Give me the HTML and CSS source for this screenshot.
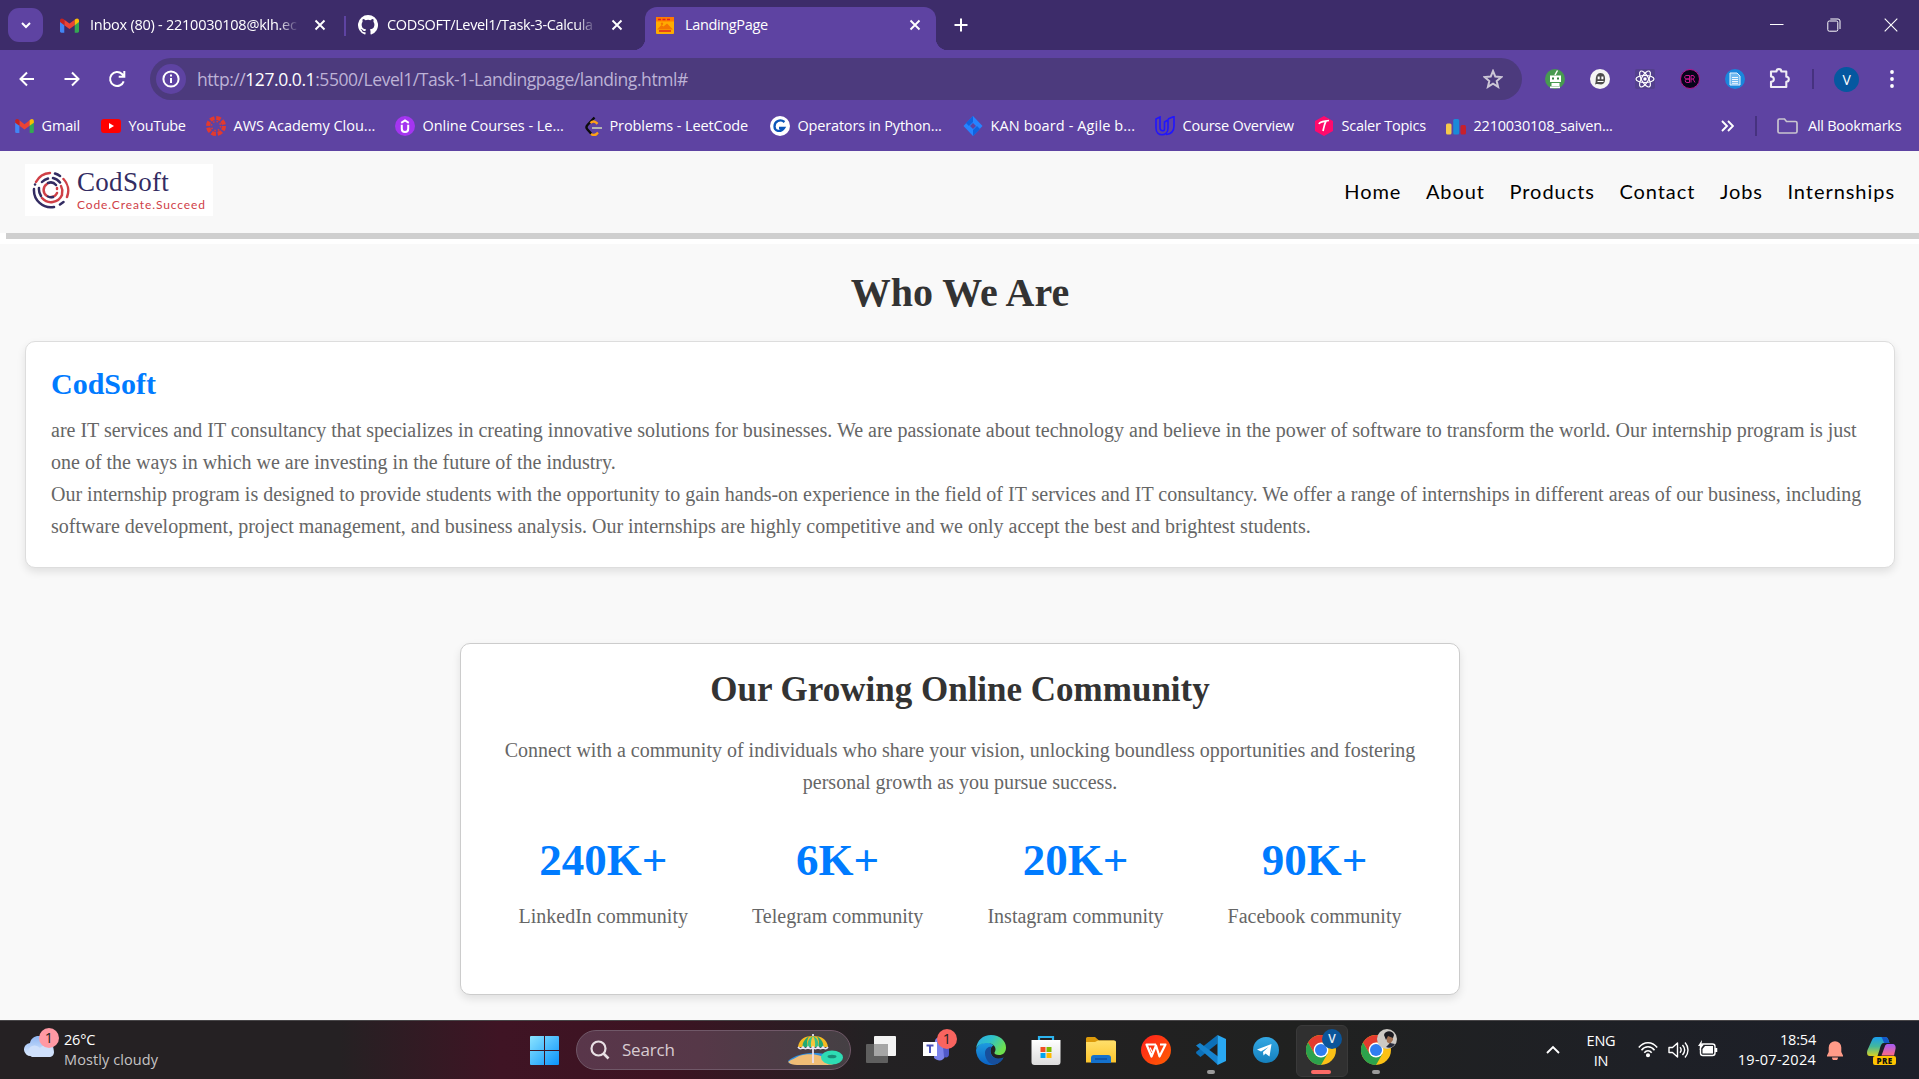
FILE: index.html
```html
<!DOCTYPE html>
<html lang="en">
<head>
<meta charset="utf-8">
<title>LandingPage</title>
<link rel="stylesheet" href="styles.css">
</head>
<body>
<svg class="defs" width="0" height="0">
  <defs>
    <linearGradient id="win" x1="0" y1="0" x2="1" y2="1"><stop offset="0" stop-color="#8be4ff"/><stop offset="1" stop-color="#0a93fb"/></linearGradient>
    <linearGradient id="edgeTop" x1="0" y1="0" x2="1" y2=".5"><stop offset="0" stop-color="#2ba9e8"/><stop offset=".5" stop-color="#2fc2c8"/><stop offset="1" stop-color="#6ee04e"/></linearGradient>
    <linearGradient id="edgeLow" x1="0" y1="0" x2="0" y2="1"><stop offset="0" stop-color="#1e9ce0"/><stop offset="1" stop-color="#0b62c4"/></linearGradient>
    <linearGradient id="folder" x1="0" y1="0" x2="0" y2="1"><stop offset="0" stop-color="#ffdf6b"/><stop offset="1" stop-color="#fcc52c"/></linearGradient>
    <linearGradient id="wps" x1="0" y1="0" x2="1" y2="1"><stop offset="0" stop-color="#ff1e1e"/><stop offset="1" stop-color="#ff5f00"/></linearGradient>
    <linearGradient id="tg" x1="0" y1="0" x2="0" y2="1"><stop offset="0" stop-color="#33a8e4"/><stop offset="1" stop-color="#1580bd"/></linearGradient>
    <linearGradient id="bag" x1="0" y1="0" x2="0" y2="1"><stop offset="0" stop-color="#fff"/><stop offset="1" stop-color="#dcdcdc"/></linearGradient>
    <linearGradient id="cloud" x1="0" y1="0" x2="0" y2="1"><stop offset="0" stop-color="#8fb6f2"/><stop offset="1" stop-color="#dcebff"/></linearGradient>
    <linearGradient id="copA" x1="0" y1="0" x2="0" y2="1"><stop offset="0" stop-color="#1a9df0"/><stop offset=".5" stop-color="#44b89a"/><stop offset="1" stop-color="#d8d222"/></linearGradient>
    <linearGradient id="copB" x1="0" y1="0" x2="0" y2="1"><stop offset="0" stop-color="#a35bf5"/><stop offset="1" stop-color="#ff6a83"/></linearGradient>
    <symbol id="gmail" viewBox="0 0 20 15"><path d="M0 2v11.5A1.4 1.4 0 0 0 1.4 15H4.500V6.500z" fill="#4285f4"/><path d="M20 2v11.500a1.400 1.400 0 0 1-1.400 1.500H15.500V6.500z" fill="#34a853"/><path d="M4.500 1.400 10 5.500l5.500-4.100v5.800L10 11.300 4.500 7.200z" fill="#ea4335"/><path d="M0 2.200C0 .2 2-.6 3.600.6l.9.800v5.800L0 3.900z" fill="#c5221f"/><path d="M20 2.200c0-2-2-2.800-3.600-1.600l-.9.800v5.800L20 3.900z" fill="#fbbc04"/></symbol>
    <symbol id="x" viewBox="0 0 12 12"><path d="M1.500 1.500l9 9m0-9-9 9" stroke="#fff" stroke-width="1.900" fill="none"/></symbol>
    <symbol id="chrome" viewBox="0 0 30 30"><circle cx="15" cy="15" r="15" fill="#fbc116"/><path d="M15 0A15 15 0 0 1 28 7.500H15L8.500 18.700 2 7.500A15 15 0 0 1 15 0z" fill="#e33b2e"/><path d="M2 7.500A15 15 0 0 0 15 30l6.500-11.300H8.500z" fill="#2ca24c"/><circle cx="15" cy="15" r="7.400" fill="#fff"/><circle cx="15" cy="15" r="6" fill="#2f7df0"/></symbol>
  </defs>
</svg>

<header class="browser">
  <div class="tabstrip">
    <div class="tab-search"><svg width="12" height="8" viewBox="0 0 12 8"><path d="M2 2l4 4 4-4" stroke="#fff" stroke-width="2" fill="none"/></svg></div>
    <div class="tab tab-mail">
      <svg width="19" height="15"><use href="#gmail"/></svg>
      <span class="tab-title faded">Inbox (80) - 2210030108@klh.ec</span>
      <svg class="tab-close" width="12" height="12"><use href="#x"/></svg>
    </div>
    <div class="tab tab-git">
      <svg width="20" height="20" viewBox="0 0 16 16"><path fill="#fff" d="M8 0a8 8 0 0 0-2.530 15.590c.4.070.55-.17.550-.38v-1.490c-2.230.48-2.700-.95-2.700-.95-.36-.92-.89-1.170-.89-1.170-.73-.5.060-.49.060-.49.800.060 1.230.83 1.230.83.710 1.220 1.870.87 2.330.66.070-.52.280-.87.510-1.070-1.780-.2-3.640-.89-3.640-3.950 0-.87.310-1.590.820-2.150-.08-.2-.36-1.020.080-2.120 0 0 .67-.21 2.200.820a7.600 7.600 0 0 1 4 0c1.530-1.040 2.200-.82 2.200-.82.440 1.100.160 1.920.080 2.120.510.560.820 1.270.820 2.150 0 3.070-1.870 3.750-3.650 3.950.290.250.540.730.540 1.480v2.200c0 .21.150.46.550.38A8 8 0 0 0 8 0z"/></svg>
      <span class="tab-title faded">CODSOFT/Level1/Task-3-Calcula</span>
      <svg class="tab-close" width="12" height="12"><use href="#x"/></svg>
    </div>
    <div class="tab tab-active">
      <svg width="18" height="17" viewBox="0 0 18 17"><rect width="18" height="17" rx="1" fill="#ffab00"/><rect width="18" height="4.500" fill="#ff7a00"/><path d="M2 2.500h3m1.500 0h3m1.500 0h3M3 14h12" stroke="#e02020" stroke-width="1.400"/><path d="M1 12.500l4.500-4.500 2 1.500 3.500-3L17 12.500z" fill="#f47500"/><circle cx="6" cy="6.800" r="1.200" fill="#f47500"/></svg>
      <span class="tab-title">LandingPage</span>
      <svg class="tab-close" width="12" height="12"><use href="#x"/></svg>
    </div>
    <svg class="new-tab" width="14" height="14" viewBox="0 0 14 14"><path d="M7 .5v13M.5 7h13" stroke="#fff" stroke-width="2"/></svg>
    <div class="window-buttons">
      <svg width="14" height="14" viewBox="0 0 14 14"><path d="M0 6.500h13.500" stroke="#fff"/></svg>
      <svg width="14" height="14" viewBox="0 0 14 14" fill="none" stroke="#fff"><rect x=".8" y="3" width="10" height="10.200" rx="1.500"/><path d="M3.300 1h7.700a2 2 0 0 1 2 2v8"/></svg>
      <svg width="14" height="14" viewBox="0 0 14 14"><path d="M.7.700l12.600 12.600m0-12.600L.700 13.300" stroke="#fff" stroke-width="1.100"/></svg>
    </div>
  </div>

  <div class="toolbar">
    <div class="nav-buttons">
      <svg width="18" height="18" viewBox="0 0 18 18" fill="none" stroke="#fff" stroke-width="2"><path d="M16 9H2.500m6.500-6.500L2.500 9 9 15.500"/></svg>
      <svg width="18" height="18" viewBox="0 0 18 18" fill="none" stroke="#fff" stroke-width="2"><path d="M1.500 9h14M9 2.500 15.500 9 9 15.500"/></svg>
      <svg width="18" height="18" viewBox="0 0 18 18" fill="none" stroke="#fff" stroke-width="2"><path d="M15.700 11.300A7 7 0 1 1 14 4l2 2.300M16.300 1v5.800h-5.600"/></svg>
    </div>
    <div class="omnibox">
      <span class="site-info"><svg width="20" height="20" viewBox="0 0 20 20"><circle cx="10" cy="10" r="7.600" fill="none" stroke="#fff" stroke-width="2"/><path d="M10 9v5M10 5.500v2" stroke="#fff" stroke-width="2"/></svg></span>
      <span class="url">http://<b>127.0.0.1</b>:5500/Level1/Task-1-Landingpage/landing.html#</span>
      <svg class="star" width="20" height="20" viewBox="0 0 20 20"><path d="M10 2l2.300 5.600 6 .5-4.600 3.900 1.400 5.900L10 14.700l-5.100 3.200 1.400-5.900L1.700 8.100l6-.5z" fill="none" stroke="#ccc6d6" stroke-width="2"/></svg>
    </div>
    <div class="extensions">
      <svg viewBox="0 0 20 20"><circle cx="10" cy="10" r="10" fill="#479a50"/><path d="M10 6l2.500-4.500" stroke="#fff" stroke-width="1.500"/><path d="M5 6.500h11v6.500H5zM6.500 14h8v3h-8z" fill="#fff"/><path d="M7 8.500h2v2H7zm5 0h2v2h-2z" fill="#34833e"/><path d="M5 18.300h10" stroke="#fff" stroke-width="1.800"/></svg>
      <svg viewBox="0 0 20 20"><circle cx="10" cy="10" r="10" fill="#f4f4f4"/><path d="M5 15.500c1-2 .6-5 .9-7C6.500 5.500 8 4 10.500 4c3.500 0 4.600 3 4.600 6 0 3.300-1.300 5.500-4 5.500-2 0-3-1-6.100 0z" fill="#4c4c4c"/><path d="M7.700 7.500h2v2.800h-2zm3.700 0h2v2.800h-2zM7.500 12h6v1h-6z" fill="#fff"/></svg>
      <svg viewBox="0 0 20 20"><rect width="20" height="20" rx="2" fill="#53408c"/><g fill="none" stroke="#fff" stroke-width="1.200"><ellipse cx="10" cy="10" rx="9" ry="3.500"/><ellipse cx="10" cy="10" rx="9" ry="3.500" transform="rotate(60 10 10)"/><ellipse cx="10" cy="10" rx="9" ry="3.500" transform="rotate(120 10 10)"/></g><circle cx="10" cy="10" r="1.700" fill="#fff"/></svg>
      <svg viewBox="0 0 20 20"><circle cx="10" cy="10" r="9.500" fill="#05051a" stroke="#b5158a"/><path d="M9.500 6.500v7H7a1.700 1.700 0 0 1 0-3.500h2.500H6a1.700 1.700 0 0 1 1-3.500zM11 13.500v-7h2a1.800 1.800 0 0 1 0 3.500h-2m2 0 2 3.500" fill="none" stroke="#c8148c" stroke-width="1"/></svg>
      <svg viewBox="0 0 20 20"><circle cx="10" cy="10" r="10" fill="#1a86dc"/><path d="M5 4h7l3 3v9H5z" fill="#6fb8ef" stroke="#e8f5ff"/><path d="M7 8.500h6M7 10.500h6M7 12.500h6M7 14.300h6" stroke="#fff" stroke-width=".9"/></svg>
      <svg class="puzzle" viewBox="0 0 22 22"><path d="M2 4.500h5.500a2.400 2.400 0 0 1 4.800 0h5v5.300a2.500 2.500 0 0 1 0 5V20H2v-5.200c3.800-.3 3.800-5 0-5.300z" fill="none" stroke="#f0edf5" stroke-width="2.100" stroke-linejoin="round"/></svg>
    </div>
    <span class="divider"></span>
    <span class="avatar">V</span>
    <svg class="kebab" width="4" height="18" viewBox="0 0 4 18" fill="#fff"><circle cx="2" cy="2" r="1.900"/><circle cx="2" cy="9" r="1.900"/><circle cx="2" cy="16" r="1.900"/></svg>
  </div>

  <nav class="bookmarks">
    <a class="bm bm-gmail"><svg width="19" height="14"><use href="#gmail"/></svg><span>Gmail</span></a>
    <a class="bm bm-yt"><svg viewBox="0 0 20 20"><rect y="3" width="20" height="14" rx="3" fill="#f00"/><path d="M8 7l5 3-5 3z" fill="#fff"/></svg><span>YouTube</span></a>
    <a class="bm bm-aws"><svg viewBox="0 0 20 20"><circle cx="10" cy="10" r="8" fill="none" stroke="#e33a2e" stroke-width="4" stroke-dasharray="4.500 1.780"/><circle cx="10" cy="10" r="4.600" fill="none" stroke="#e33a2e" stroke-width="1.600" stroke-dasharray="1.500 2.110"/></svg><span>AWS Academy Clou...</span></a>
    <a class="bm bm-courses"><svg viewBox="0 0 20 20"><circle cx="10" cy="10" r="10" fill="#a435f0"/><path d="M6.800 8.800v4c0 4.400 6.400 4.400 6.400 0v-4M6.200 6.800 10 4.500l3.800 2.300" fill="none" stroke="#fff" stroke-width="2"/></svg><span>Online Courses - Le...</span></a>
    <a class="bm bm-leet"><svg viewBox="0 0 17 20"><path d="M9.500 1.500l-7 7.500c-1.500 1.700-1.500 3 0 4.500l4 4.500" fill="none" stroke="#0b0b0b" stroke-width="2.400"/><path d="M5.500 7c2-2 4-2 6-.2l1 1M6 17.800c2 1.700 4 1.500 5.500.2l1.500-1.500" fill="none" stroke="#ffa116" stroke-width="2.400"/><path d="M7 12h10" stroke="#b3b3b3" stroke-width="2"/></svg><span>Problems - LeetCode</span></a>
    <a class="bm bm-python"><svg viewBox="0 0 20 20"><circle cx="10" cy="10" r="10" fill="#fff"/><path d="M14.500 6C10 2.500 4.500 5.500 4.500 10.500c0 4.500 6 6.500 9.500 1.500H9" fill="none" stroke="#0a55b8" stroke-width="2.300"/></svg><span>Operators in Python...</span></a>
    <a class="bm bm-kan"><svg viewBox="0 0 20 20"><path d="M10 0l9.500 10L10 20 .5 10z" fill="#2684ff"/><path d="M10 0v6L6 10l-3-3zM10 20v-6l4-4 3 3z" fill="#1062e0"/><path d="M10 7l3 3-3 3-3-3z" fill="#5e43a2"/></svg><span>KAN board - Agile b...</span></a>
    <a class="bm bm-overview"><svg viewBox="0 0 20 20" fill="none" stroke="#2015ff" stroke-width="1.600"><path d="M5 1L1 3v9c0 9 12 9 12 0V4L9.500 6v7c0 3-4.500 2-4.500-1z"/><path d="M13 3l6-2.500V10c0 5-3 8-8 8.500"/></svg><span>Course Overview</span></a>
    <a class="bm bm-scaler"><svg viewBox="0 0 20 20"><path d="M10 0l9 5v10l-9 5-9-5V5z" fill="#ff0a6c"/><path d="M5 8c1-3 5-2.500 10-3.500M12 5c-1.500 3-2 6-3 10" fill="none" stroke="#fff" stroke-width="1.700"/></svg><span>Scaler Topics</span></a>
    <a class="bm bm-saiven"><svg viewBox="0 0 20 20"><rect y="7.500" width="5.500" height="11" rx="1.500" fill="#f5c84c"/><rect x="7.200" y="3" width="6" height="15.500" rx="1.500" fill="#1a8ad8"/><rect x="14.500" y="9" width="5.500" height="9.500" rx="1.500" fill="#c8202c"/></svg><span>2210030108_saiven...</span></a>
    <svg class="more" width="13" height="12" viewBox="0 0 13 12"><path d="M1 1l5 5-5 5m6-10 5 5-5 5" fill="none" stroke="#fff" stroke-width="1.900"/></svg>
    <span class="divider"></span>
    <a class="bm all"><svg class="folder-ico" viewBox="0 0 21 16"><path d="M2.500 1h5l2 2.500h9A1.500 1.500 0 0 1 20 5v8.500a1.500 1.500 0 0 1-1.500 1.500h-16A1.500 1.500 0 0 1 1 13.500v-11A1.500 1.500 0 0 1 2.500 1z" fill="none" stroke="#c9c5cf" stroke-width="1.700"/></svg><span>All Bookmarks</span></a>
  </nav>
</header>

<main class="page">
  <div class="site-header">
    <div class="logo">
      <svg width="38" height="38" viewBox="-19 -19 38 38" fill="none" stroke-width="2.500" stroke-linecap="round"><g stroke="#cf4047"><path d="M-15-8A17 17 0 0 1-1-17M12.500-11A17 17 0 0 1 16 7M-9 8A12 12 0 0 0 11 5M-4 6A7 7 0 0 1-4-6M0 7A7 7 0 0 0 6 3"/><path d="M6-2v1M10-4a11 11 0 0 1 1 8"/></g><g stroke="#332c62"><path d="M4-16.500A17 17 0 0 1 9-14M-17-1A17 17 0 0 0 3 17M9 14.500L12.500 12M-12-2A12 12 0 0 0-10 6M-9-8A12 12 0 0 1-3-11.500M2-12A12 12 0 0 1 9-7.500M-3-7A7 7 0 0 1 5-5M-3 6.500A7 7 0 0 0 2 7"/><path d="M-16-5.500v.1"/></g></svg>
      <div class="logo-text"><span class="logo-name">CodSoft</span><span class="logo-tag">Code.Create.Succeed</span></div>
    </div>
    <nav class="site-nav"><a>Home</a><a>About</a><a>Products</a><a>Contact</a><a>Jobs</a><a>Internships</a></nav>
  </div>
  <div class="rule"></div>

  <section class="who">
    <h1>Who We Are</h1>
    <article class="about-card">
      <h2>CodSoft</h2>
      <p>are IT services and IT consultancy that specializes in creating innovative solutions for businesses. We are passionate about technology and believe in the power of software to transform the world. Our internship program is just one of the ways in which we are investing in the future of the industry.<br>Our internship program is designed to provide students with the opportunity to gain hands-on experience in the field of IT services and IT consultancy. We offer a range of internships in different areas of our business, including software development, project management, and business analysis. Our internships are highly competitive and we only accept the best and brightest students.</p>
    </article>
  </section>

  <section class="community">
    <h2>Our Growing Online Community</h2>
    <p>Connect with a community of individuals who share your vision, unlocking boundless opportunities and fostering personal growth as you pursue success.</p>
    <div class="stats">
      <div class="stat"><strong>240K+</strong><span>LinkedIn community</span></div>
      <div class="stat"><strong>6K+</strong><span>Telegram community</span></div>
      <div class="stat"><strong>20K+</strong><span>Instagram community</span></div>
      <div class="stat"><strong>90K+</strong><span>Facebook community</span></div>
    </div>
  </section>
</main>

<footer class="taskbar">
  <div class="weather">
    <div class="weather-icon">
      <svg width="32" height="24" viewBox="0 0 32 24"><circle cx="23" cy="8" r="6" fill="#f58220"/><path d="M7 21a6.500 6.500 0 0 1-1-13C8-1 20-1 22 7a7 7 0 0 1 1 14z" fill="url(#cloud)"/><path d="M8 22a6 6 0 0 1 0-11c3-1.500 6 0 8 2 4-5 14-3 14 4 0 3-2 5-5 5z" fill="#cfe0fb"/></svg>
      <span class="badge pink">1</span>
    </div>
    <div class="weather-text"><span>26°C</span><span class="dim">Mostly cloudy</span></div>
  </div>

  <div class="apps">
    <svg class="start" width="29" height="29" viewBox="0 0 29 29"><path d="M0 1a1 1 0 0 1 1-1h13v14H0zM15 0h13a1 1 0 0 1 1 1v13H15zM0 15h14v14H1a1 1 0 0 1-1-1zM15 15h14v13a1 1 0 0 1-1 1H15z" fill="url(#win)"/></svg>
    <div class="search">
      <svg width="20" height="20" viewBox="0 0 20 20"><circle cx="8.500" cy="8.500" r="7" fill="none" stroke="#e8e0e4" stroke-width="2.200"/><path d="M13.500 13.500l5 5" stroke="#e8e0e4" stroke-width="2.600"/></svg>
      <span>Search</span>
      <svg class="beach" width="56" height="32" viewBox="0 0 56 32"><path d="M1 27C10 19 28 17 42 21l-8 5-31 4z" fill="#2f8fe0"/><path d="M1 28c4-3 8-4 11-6 9-3 21-2 28 3l10 3c-3 3-8 3-14 3H10c-4 0-7-1-9-3z" fill="#f0bd76"/><path d="M26 0v29" stroke="#e9dff0" stroke-width="1.800"/><path d="M11 13C12 5 18 2 26 2s14 3 15 11z" fill="#f5b921"/><path d="M15.500 13c0-5 2.500-8.500 6.500-10.500C20 5 19.500 9 20.500 13zM31.500 13c1-4 .5-8-1.500-10.500C34 4.500 36.500 8 36.500 13z" fill="#22a873"/><path d="M20.500 13c-.5-5 1.500-9.500 5.500-11 4 1.500 6 6 5.500 11z" fill="#38bf88"/><path d="M24 13c-.5-5 .5-9 2-11 1.500 2 2.500 6 2 11z" fill="#f5c53a"/><path d="M11 13q2.500 3.500 5 0 2.500 3.500 5 0 2.500 3.500 5 0 2.500 3.500 5 0 2.500 3.500 5 0 2.500 3.500 5 0" fill="none" stroke="#ece6f6" stroke-width="1.600"/><ellipse cx="45" cy="23.500" rx="11" ry="7" fill="#2edcb4"/><ellipse cx="45" cy="22.500" rx="4.500" ry="1.800" fill="#1a8c78"/></svg>
    </div>
    <svg class="app taskview" viewBox="0 0 30 30"><rect x="8" y="1" width="22" height="20" rx="1" fill="#f3f3f3"/><rect y="9" width="22" height="19" rx="1" fill="#666" opacity=".9"/><rect x="8" y="9" width="14" height="12" fill="#a5a5a5"/></svg>
    <div class="app teams"><svg width="30" height="30" viewBox="0 0 30 30"><path d="M12 8a5 5 0 0 1 8-5v10h2v8c-1 5-7 6-11 2z" fill="#7b83eb"/><path d="M20 11h6v8c0 3-2 4-5 3z" fill="#5059c9"/><rect y="7" width="14" height="14" fill="#fff"/><path d="M3.500 10.500h7M7 10v8" stroke="#4b53bc" stroke-width="2"/></svg><span class="badge red">1</span></div>
    <svg class="app" viewBox="0 0 30 30"><path d="M0 15A15 15 0 0 0 19 29.500c4-1 7-4 8.500-7-5 3-12 1-13-6-.3-3 1-5 3-6C13 6 3 6 0 15z" fill="url(#edgeLow)"/><path d="M9 18c0 7 5 12 10 11.500 4-1 7-4 8.500-7-6 3-13 0-13-6-.3-3 1-5 1-5-4 0-6.500 3-6.500 6.500z" fill="#174f9c"/><path d="M0 14C1 5 7 0 15 0c9 0 15 6 15 12.500 0 5-3 7.500-7 7.500-3 0-5-1-4.500-2.500 3-4-.5-9.500-7-9.500C6 8 1.500 10 0 14z" fill="url(#edgeTop)"/></svg>
    <svg class="app" viewBox="0 0 30 30"><path d="M8 6V2h14v4" fill="none" stroke="#2cb4ee" stroke-width="2.200"/><path d="M.500 5h29v22a3 3 0 0 1-3 3h-23a3 3 0 0 1-3-3z" fill="url(#bag)"/><path d="M9.500 12h5v5h-5z" fill="#f04e23"/><path d="M15.500 12h5v5h-5z" fill="#7fba00"/><path d="M9.500 18h5v5h-5z" fill="#00a4ef"/><path d="M15.500 18h5v5h-5z" fill="#ffb900"/></svg>
    <svg class="app" viewBox="0 0 30 30"><path d="M0 3.500A1.500 1.500 0 0 1 1.500 2H9l4 3.500H28V14H0z" fill="#dc9a0a"/><path d="M0 7h9l3-1.500h16.500A1.500 1.500 0 0 1 30 7v20.500H0z" fill="url(#folder)"/><path d="M5 28v-5a3 3 0 0 1 3-3h14a3 3 0 0 1 3 3v5z" fill="#1471cc"/><path d="M9 24h12" stroke="#0a4a9c" stroke-width="1.300"/></svg>
    <svg class="app" viewBox="0 0 30 30"><circle cx="15" cy="15" r="15" fill="url(#wps)"/><path d="M15 9.500H5.500l5 12L15 10.500l3.500 11 6-12H19" fill="none" stroke="#fff" stroke-width="2.200" stroke-linejoin="round"/><path d="M9 12.500l2.500 5" stroke="#fff" stroke-width="1.300"/></svg>
    <div class="app"><svg width="30" height="30" viewBox="0 0 30 30"><path d="M21.500 0v8.500L4.500 22 .500 18.700 0 17z" fill="#0c70b8"/><path d="M0 10.500L4 8l18 13.500V30z" fill="#1683ce"/><path d="M21.500 0L30 4v22l-8.500 4z" fill="#29a8f2"/></svg><i class="dot"></i></div>
    <svg class="app" viewBox="0 0 30 30"><circle cx="15" cy="15" r="13" fill="url(#tg)"/><path d="M6 14.500L20.500 9 18.500 21.500l-4-3-2 2-.5-3.500 5.500-5-7.500 4.500z" fill="#fff"/></svg>
    <div class="app current"><svg width="30" height="30"><use href="#chrome"/></svg><span class="badge profile">V</span><i class="dot long"></i></div>
    <div class="app"><svg width="30" height="30"><use href="#chrome"/></svg><svg class="face" width="20" height="20" viewBox="0 0 20 20"><circle cx="10" cy="10" r="10" fill="#cdc9c4"/><path d="M9 5c3-3 7-1 7 2v4l-3 4-3-2z" fill="#a06e50"/><path d="M7 6c1-5 9-5 10 0l-1 3-5-2-2 4z" fill="#1b1a20"/><path d="M9 18l4-4 5 1c-2 3-5 5-9 3z" fill="#262b3c"/></svg><i class="dot"></i></div>
  </div>

  <div class="tray">
    <svg class="up" width="14" height="9" viewBox="0 0 14 9"><path d="M1 8l6-6 6 6" fill="none" stroke="#fff" stroke-width="1.900"/></svg>
    <div class="lang"><span>ENG</span><span>IN</span></div>
    <svg class="wifi" width="20" height="17" viewBox="0 0 20 17" fill="none" stroke="#fff" stroke-width="1.500"><path d="M.8 6.500c5-6.500 13.400-6.500 18.400 0M3.500 9.200c3.500-4.600 9.500-4.600 13 0M6.300 11.800c2-2.600 5.400-2.600 7.400 0"/><circle cx="10" cy="14.300" r="1.300" fill="#fff"/></svg>
    <svg class="vol" width="21" height="18" viewBox="0 0 21 18" fill="none" stroke="#fff" stroke-width="1.400"><path d="M1 6.500h3.500L9.500 2v14l-5-4.500H1z" stroke-linejoin="round"/><path d="M12 6.300c1.300 1.500 1.300 3.900 0 5.400M14.500 4c2.600 3 2.600 7 0 10M17 1.500c4 4.500 4 10.500 0 15"/></svg>
    <svg class="bat" width="20" height="17" viewBox="0 0 20 17"><rect x="2.500" y="4" width="14.500" height="11.500" rx="2.500" fill="none" stroke="#fff" stroke-width="1.400"/><path d="M7 6h8v7.500H4.500V9z" fill="#fff"/><path d="M18 8v4" stroke="#fff" stroke-width="2.500"/><path d="M4 0L0 6h2.500L1.500 10 6 4.500H3.500z" fill="#fff"/></svg>
    <div class="clock"><span>18:54</span><span class="date">19-07-2024</span></div>
    <svg class="bell" width="16" height="19" viewBox="0 0 16 19"><path d="M0 14.500L1.700 11V6.500a6.300 6.300 0 0 1 12.600 0V11l1.700 3.500v1H0zM5 16.500h6a3 3 0 0 1-6 0z" fill="#ff9b88"/></svg>
    <div class="copilot"><svg width="29" height="20" viewBox="0 0 29 20"><path d="M9 0h9c3 0 3.500 3 4.500 6h-6c-2 0-3 3-4 7l-2 6H3c-3 0-3.500-3-2.500-6L5 3c.8-2 2-3 4-3z" fill="url(#copA)"/><path d="M21 7h4c3 0 4 2 3.500 5L27 18.500H14.500L18 9c.6-1.500 1.500-2 3-2z" fill="url(#copB)"/><path d="M14 0h4c3 0 3.500 3 4.500 6h-5c-1 0-2-6-3.500-6z" fill="#1458c8"/></svg><span>PRE</span></div>
  </div>
</footer>
</body>
</html>
```
FILE: styles.css
```css
* { box-sizing: border-box; }
body {
  margin: 0;
  width: 1919px;
  height: 1079px;
  overflow: hidden;
  display: flex;
  flex-direction: column;
  background: #f9f9f9;
  font-family: "Liberation Serif", "Times New Roman", serif;
}
svg { display: block; flex: none; }
.defs { position: absolute; }

/* Browser window */
.browser {
  height: 151px;
  flex: none;
  background: #5e43a2;
  color: #fff;
  font-family: "Open Sans", "Noto Sans", sans-serif;
  font-size: 14.5px;
  letter-spacing: -0.35px;
}
.tabstrip {
  height: 50px;
  background: #3d2c6a;
  display: flex;
  align-items: center;
}
.tab-search {
  width: 35px;
  height: 34px;
  margin: 0 17px 0 8px;
  border-radius: 11px;
  background: #5e43a2;
  display: flex;
  align-items: center;
  justify-content: center;
}
.tab { display: flex; align-items: center; height: 43px; }
.tab-title { flex: 1; white-space: nowrap; line-height: 22px; }
.tab-close { margin-left: 15px; }
.faded { -webkit-mask-image: linear-gradient(90deg, #000 90%, transparent); mask-image: linear-gradient(90deg, #000 90%, transparent); }
.tab-mail { width: 266px; gap: 11px; letter-spacing: -0.25px; }
.tab-mail .tab-close { margin-left: 4px; }
.tab-git { width: 279px; gap: 9px; margin-left: 18px; position: relative; padding-left: 14px; }
.tab-git .tab-close { margin-left: 5px; }
.tab-git::before { content: ""; position: absolute; left: 0; top: 12px; width: 2px; height: 20px; background: #5e43a2; }
.tab-active {
  width: 291px;
  margin-left: 22px;
  align-self: flex-end;
  padding: 0 15px 7px 11px;
  gap: 11px;
  background: #5e43a2;
  border-radius: 12px 12px 0 0;
  position: relative;
  height: 43px;
}
.tab-active::before, .tab-active::after {
  content: "";
  position: absolute;
  bottom: 0;
  width: 12px;
  height: 12px;
}
.tab-active::before { left: -12px; background: radial-gradient(circle at 0 0, transparent 12px, #5e43a2 12.5px); }
.tab-active::after { right: -12px; background: radial-gradient(circle at 100% 0, transparent 12px, #5e43a2 12.5px); }
.new-tab { margin-left: 18px; }
.window-buttons { margin-left: auto; display: flex; gap: 43px; padding-right: 21px; }

.toolbar { height: 58px; display: flex; align-items: center; }
.nav-buttons { display: flex; gap: 27px; margin-left: 18px; width: 132px; }
.omnibox {
  width: 1372px;
  height: 42px;
  border-radius: 21px;
  background: #4c3a7d;
  display: flex;
  align-items: center;
  padding: 0 19px 0 6px;
}
.site-info {
  width: 30px;
  height: 30px;
  border-radius: 50%;
  background: #5e43a2;
  display: flex;
  align-items: center;
  justify-content: center;
}
.url { margin-left: 11px; flex: 1; font-size: 17.5px; letter-spacing: -0.44px; color: #bdb2d6; }
.url b { font-weight: 400; color: #fff; }
.extensions { display: flex; align-items: center; gap: 25px; margin-left: 23px; }
.extensions svg { width: 20px; height: 20px; }
.extensions .puzzle { width: 22px; height: 24px; margin-left: -1px; margin-top: -3px; }
.divider { width: 2px; height: 20px; background: #46327f; margin-left: 21px; }
.avatar {
  width: 25px;
  height: 25px;
  margin-left: 20px;
  border-radius: 50%;
  background: #0558a0;
  font-size: 14px;
  line-height: 25px;
  text-align: center;
}
.kebab { margin-left: 31px; }

.bookmarks { height: 35px; display: flex; align-items: center; padding-left: 15px; }
.bm { display: flex; align-items: center; gap: 7.500px; white-space: nowrap; }
.bm svg { width: 20px; height: 20px; }
.bm-gmail { width: 86px; letter-spacing: -0.15px; }
.bm-gmail svg { width: 19px; height: 14px; }
.bm-yt { width: 105px; }
.bm-aws { width: 189px; letter-spacing: 0; }
.bm-courses { width: 190px; letter-spacing: -0.05px; }
.bm-leet { width: 185px; letter-spacing: -0.1px; }
.bm-leet svg { width: 17px; }
.bm-python { width: 193px; letter-spacing: -0.18px; }
.bm-kan { width: 192px; letter-spacing: 0.12px; }
.bm-overview { width: 159px; letter-spacing: -0.2px; }
.bm-scaler { width: 132px; letter-spacing: -0.25px; }
.bm-saiven { width: 275px; letter-spacing: -0.22px; }
.bookmarks .divider { margin-left: 21px; margin-right: 20px; }
.bm .folder-ico { width: 21px; height: 16px; }
.all { gap: 10px; letter-spacing: -0.25px; }

/* Landing page */
.page { height: 869px; flex: none; background: #f9f9f9; }
.site-header {
  height: 82px;
  background: #f8f8f8;
  display: flex;
  justify-content: space-between;
  align-items: flex-start;
  padding: 13px 24px 0 25px;
}
.logo { width: 188px; height: 52px; background: #fff; display: flex; padding: 7px 0 0 7px; gap: 7px; }
.logo-text { display: flex; flex-direction: column; margin-top: -4px; }
.logo-name { font-size: 27px; line-height: 31px; color: #332c62; letter-spacing: 0.3px; }
.logo-tag { font: 12px/15px Lato, sans-serif; margin-top: -1px; color: #cf4047; letter-spacing: 0.9px; }
.site-nav { display: flex; gap: 24.5px; padding-top: 14px; font: 20px/26px Lato, sans-serif; letter-spacing: 0.95px; color: #000; }
.rule { height: 11px; background: linear-gradient(#cfcfcf 6px, #fff 6px); border-left: 6px solid #fff; }

.who { padding: 25px 24px 0 25px; text-align: center; }
.who h1 { margin: 0 0 24px; font-size: 40px; line-height: 48px; color: #333; }
.about-card {
  height: 227px;
  text-align: left;
  background: #fff;
  border: 1px solid #ddd;
  border-radius: 10px;
  padding: 24px 25px;
  box-shadow: 0 4px 8px rgba(0, 0, 0, 0.1);
}
.about-card h2 { margin: 0 0 12px; font-size: 30px; line-height: 36px; color: #007bff; }
.about-card p, .community p { margin: 0; font-size: 20px; line-height: 32px; color: #666; }
.community {
  width: 1000px;
  height: 352px;
  margin: 75px auto 0;
  padding: 25px 25px 24px 26px;
  text-align: center;
  background: #fff;
  border: 1px solid #ccc;
  border-radius: 10px;
  box-shadow: 0 4px 8px rgba(0, 0, 0, 0.1);
}
.community h2 { margin: 0 0 23px; font-size: 35px; line-height: 42px; color: #333; }
.stats { display: flex; justify-content: space-around; margin-top: 35px; }
.stat { display: flex; flex-direction: column; align-items: center; }
.stat strong { font-size: 45px; line-height: 54px; color: #007bff; }
.stat span { margin-top: 13px; font-size: 20px; line-height: 32px; color: #666; }

/* Windows taskbar */
.taskbar {
  height: 59px;
  flex: none;
  display: flex;
  color: #fff;
  border-top: 1px solid #484648;
  background: linear-gradient(90deg, #252123 0, #252123 340px, #3f1424 500px, #3d1322 660px, #232123 870px, #202120 1300px, #1e2026 1650px, #1c1f29 1919px);
  font: 14.5px/20px "Open Sans", "Noto Sans", sans-serif;
  letter-spacing: -0.2px;
}
.weather { width: 530px; display: flex; padding-left: 24px; }
.weather-icon { position: relative; width: 40px; padding-top: 14px; }
.badge {
  position: absolute;
  width: 20px;
  height: 20px;
  border-radius: 50%;
  color: #222;
  text-align: center;
  line-height: 20px;
  letter-spacing: 0;
}
.pink { left: 15px; top: 7px; background: #ff99a4; }
.weather-text, .clock, .lang { display: flex; flex-direction: column; padding-top: 9px; }
.dim { color: #c6c4c5; letter-spacing: 0.1px; }
.apps { display: flex; width: 1016px; }
.start { margin-top: 15px; }
.search {
  width: 275px;
  height: 40px;
  margin: 9px 15px 0 17px;
  border-radius: 20px;
  border: 1px solid #705868;
  background: linear-gradient(90deg, #59364a, #563848 45%, #454044);
  display: flex;
  align-items: center;
  padding: 0 7px 0 13px;
  font-size: 17px;
  color: #d8ccd2;
}
.search span { margin-left: 12px; flex: 1; }
.app { width: 30px; height: 30px; margin: 14px 25px 0 0; position: relative; flex: none; }
.teams { margin-left: 2px; margin-right: 23px; }
.red { left: 14px; top: -6px; background: #f9645f; }
.profile { left: 16px; top: -6px; background: #0a559a; color: #e3edf7; font-size: 12px; font-weight: 600; }
.face { position: absolute; left: 16px; top: -6px; }
.current::before { content: ""; position: absolute; left: -10px; top: -10px; width: 50px; height: 50px; border-radius: 6px; background: #303030; border: 1px solid #3a3a3a; }
.current svg { position: relative; }
.dot { position: absolute; left: 11px; top: 35px; width: 8px; height: 4px; border-radius: 2px; background: #9a9a9a; }
.dot.long { left: 5px; width: 20px; background: #fb6b66; }
.tray { display: flex; align-items: flex-start; }
.up { margin-top: 24px; }
.lang { width: 50px; margin-left: 16px; align-items: center; padding-top: 10px; }
.wifi { margin: 20px 0 0 12px; }
.vol { margin: 20px 0 0 10px; }
.bat { margin: 19px 0 0 9px; }
.clock { width: 98px; align-items: flex-end; white-space: nowrap; }
.date { letter-spacing: 0.25px; }
.bell { margin: 20px 0 0 11px; }
.copilot { margin: 16px 0 0 23px; width: 30px; display: flex; flex-direction: column; align-items: flex-end; }
.copilot span { width: 23px; height: 9px; margin-top: -1px; border-radius: 2px; background: #ffc400; color: #111; font-size: 8px; line-height: 9px; font-weight: 800; text-align: center; letter-spacing: 0.3px; }
```
